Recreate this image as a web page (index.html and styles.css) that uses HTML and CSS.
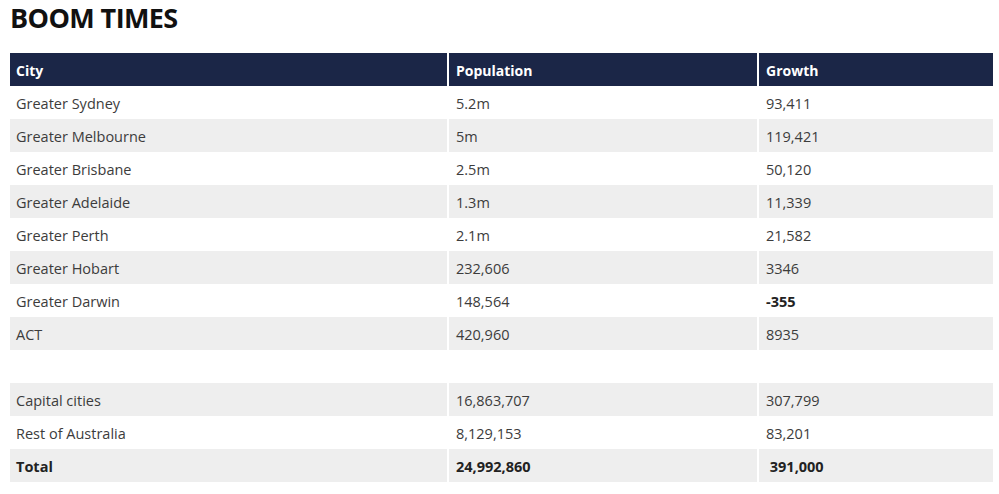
FILE: index.html
```html
<!DOCTYPE html>
<html>
<head>
<meta charset="utf-8">
<link rel="stylesheet" href="styles.css">
</head>
<body>
<h1 class="title">BOOM TIMES</h1>
<table class="data">
  <colgroup>
    <col class="c1"><col class="c2"><col class="c3">
  </colgroup>
  <thead>
    <tr><th>City</th><th>Population</th><th>Growth</th></tr>
  </thead>
  <tbody>
    <tr><td>Greater Sydney</td><td>5.2m</td><td>93,411</td></tr>
    <tr class="alt"><td>Greater Melbourne</td><td>5m</td><td>119,421</td></tr>
    <tr><td>Greater Brisbane</td><td>2.5m</td><td>50,120</td></tr>
    <tr class="alt"><td>Greater Adelaide</td><td>1.3m</td><td>11,339</td></tr>
    <tr><td>Greater Perth</td><td>2.1m</td><td>21,582</td></tr>
    <tr class="alt"><td>Greater Hobart</td><td>232,606</td><td>3346</td></tr>
    <tr><td>Greater Darwin</td><td>148,564</td><td class="strong">-355</td></tr>
    <tr class="alt"><td>ACT</td><td>420,960</td><td>8935</td></tr>
    <tr><td></td><td></td><td></td></tr>
    <tr class="alt"><td>Capital cities</td><td>16,863,707</td><td>307,799</td></tr>
    <tr><td>Rest of Australia</td><td>8,129,153</td><td>83,201</td></tr>
    <tr class="alt total"><td>Total</td><td>24,992,860</td><td>&nbsp;391,000</td></tr>
  </tbody>
</table>
</body>
</html>
```
FILE: styles.css
```css
html, body {
  margin: 0;
  padding: 0;
  background: #ffffff;
}
body {
  padding: 0 8px;
  font-family: "Open Sans", "Liberation Sans", sans-serif;
  color: #333333;
}
.title {
  margin: 0;
  padding: 0 2px;
  font-family: "Open Sans", "Liberation Sans", sans-serif;
  font-weight: 700;
  font-size: 27px;
  line-height: 35px;
  height: 53px;
  color: #111111;
  letter-spacing: -0.6px;
}
.data {
  border-collapse: separate;
  border-spacing: 2px 0;
  table-layout: fixed;
  width: 987px;
}
.c1 { width: 437px; }
.c2 { width: 308px; }
.c3 { width: 234px; }
.data th, .data td {
  height: 33px;
  padding: 2px 7px 0 6px;
  box-sizing: border-box;
  text-align: left;
  vertical-align: middle;
  font-size: 14.5px;
  line-height: 18px;
}
.data td:not(:first-child), .data th:not(:first-child) {
  padding-left: 7px;
}
.data th {
  background: #1b2647;
  color: #ffffff;
  font-weight: 700;
  font-size: 14px;
}
.data td {
  font-weight: 400;
  color: #3c3c3c;
}
.data tr.alt td {
  background: #eeeeee;
}
.data td.strong, .data tr.total td {
  font-weight: 700;
  color: #222222;
}
```
